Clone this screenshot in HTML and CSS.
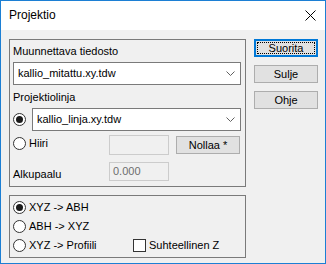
FILE: index.html
```html
<!DOCTYPE html>
<html>
<head>
<meta charset="utf-8">
<link rel="stylesheet" href="styles.css">
</head>
<body>
<div class="window">
  <div class="titlebar">
    <span class="title">Projektio</span>
    <svg class="close" width="11" height="11" viewBox="0 0 11 11"><path d="M0.5 0.5 L10.5 10.5 M10.5 0.5 L0.5 10.5" stroke="#000" stroke-width="1" fill="none"/></svg>
  </div>
  <div class="content">
    <div class="left">
      <div class="group g1">
        <div class="label">Muunnettava tiedosto</div>
        <div class="combo c1"><span>kallio_mitattu.xy.tdw</span><svg class="chev" width="9" height="5" viewBox="0 0 9 5"><path d="M0.5 0.5 L4.5 4.5 L8.5 0.5" stroke="#606060" fill="none"/></svg></div>
        <div class="label l2">Projektiolinja</div>
        <div class="row r2">
          <span class="radio checked"></span>
          <div class="combo c2"><span>kallio_linja.xy.tdw</span><svg class="chev" width="9" height="5" viewBox="0 0 9 5"><path d="M0.5 0.5 L4.5 4.5 L8.5 0.5" stroke="#606060" fill="none"/></svg></div>
        </div>
        <div class="row r3">
          <div class="lead"><span class="radio"></span><span class="rtext">Hiiri</span></div>
          <div class="edit e1"></div>
          <div class="btn nollaa">Nollaa *</div>
        </div>
        <div class="row r4">
          <div class="lead"><span class="altext">Alkupaalu</span></div>
          <div class="edit e2">0.000</div>
        </div>
      </div>
      <div class="group g2">
        <div class="opt o1"><span class="radio checked"></span><span class="rtext">XYZ -&gt; ABH</span></div>
        <div class="opt o2"><span class="radio"></span><span class="rtext">ABH -&gt; XYZ</span></div>
        <div class="opt o3">
          <div class="optlead"><span class="radio"></span><span class="rtext">XYZ -&gt; Profiili</span></div>
          <span class="check"></span><span class="ctext">Suhteellinen Z</span>
        </div>
      </div>
    </div>
    <div class="right">
      <div class="btn def"><span class="focus">Suorita</span></div>
      <div class="btn">Sulje</div>
      <div class="btn">Ohje</div>
    </div>
  </div>
</div>
</body>
</html>
```
FILE: styles.css
```css
html, body { margin: 0; padding: 0; }
body { background: #f0f0f0; }
.window {
  width: 326px; height: 264px; box-sizing: border-box;
  border: 1px solid #1c7fd4; background: #f0f0f0;
  display: flex; flex-direction: column;
  font-family: "Liberation Sans", Arial, sans-serif; font-size: 11px; color: #000;
}
.titlebar {
  height: 29px; flex: none; background: #fff;
  display: flex; align-items: center; justify-content: space-between;
  padding: 0 9px 0 8px; font-size: 12px; line-height: 15px;
}
.close { display: block; }
.content { display: flex; gap: 8px; padding: 9px 0 0 8px; }
.left { width: 237px; display: flex; flex-direction: column; gap: 8px; }
.group { border: 1px solid #7a7a7a; box-sizing: border-box; }
.g1 { height: 148px; padding: 4px 4px 0 3px; }
.label { line-height: 15px; height: 15px; }
.l2 { margin-top: 5px; }
.combo {
  height: 23px; box-sizing: border-box; border: 1px solid #7a7a7a; background: #fff;
  display: flex; align-items: center; justify-content: space-between;
  padding: 0 5px 1px 4px; line-height: 15px;
}
.c1 { margin-top: 3px; }
.chev { display: block; margin-top: 1px; }
.row { display: flex; }
.r2 { margin-top: 3px; align-items: center; gap: 6px; }
.c2 { width: 209px; }
.radio {
  width: 13px; height: 13px; box-sizing: border-box; border-radius: 50%;
  border: 1px solid #333; background: #fff; flex: none; position: relative; display: block;
}
.radio.checked::after {
  content: ""; position: absolute; left: 2px; top: 2px; width: 7px; height: 7px;
  border-radius: 50%; background: #1a1a1a;
}
.r3 { margin-top: 4px; align-items: flex-start; }
.lead { width: 96px; display: flex; align-items: center; gap: 3px; }
.r3 .lead { margin-top: 1px; }
.rtext { line-height: 15px; }
.edit {
  width: 60px; box-sizing: border-box; border: 1px solid #cccccc; background: #f0f0f0;
  color: #6d6d6d; padding: 0 3px; line-height: 15px;
}
.e1 { height: 20px; }
.e2 { height: 19px; display: flex; align-items: center; }
.btn {
  width: 64px; height: 18px; box-sizing: border-box; border: 1px solid #adadad;
  background: #e1e1e1; display: flex; align-items: center; justify-content: center;
  line-height: 15px;
}
.nollaa { margin-left: 7px; margin-top: 1px; }
.r4 { margin-top: 7px; align-items: flex-start; }
.altext { margin-top: 5px; line-height: 15px; }
.g2 { height: 63px; padding: 1px 0 0 3px; }
.opt { display: flex; align-items: center; gap: 3px; height: 20px; }
.o2, .o3 { height: 19px; }
.optlead { width: 117px; display: flex; align-items: center; gap: 3px; }
.check {
  width: 13px; height: 13px; box-sizing: border-box; border: 1px solid #333; background: #fff;
  display: block; flex: none;
}
.ctext { line-height: 15px; }
.right { display: flex; flex-direction: column; gap: 8px; width: 64px; }
.btn.def { border: 2px solid #0078d7; position: relative; }
.btn.def::before {
  content: ""; position: absolute; left: 1px; top: 1px; right: 1px; bottom: 1px;
  border: 1px dotted #000;
}
```
